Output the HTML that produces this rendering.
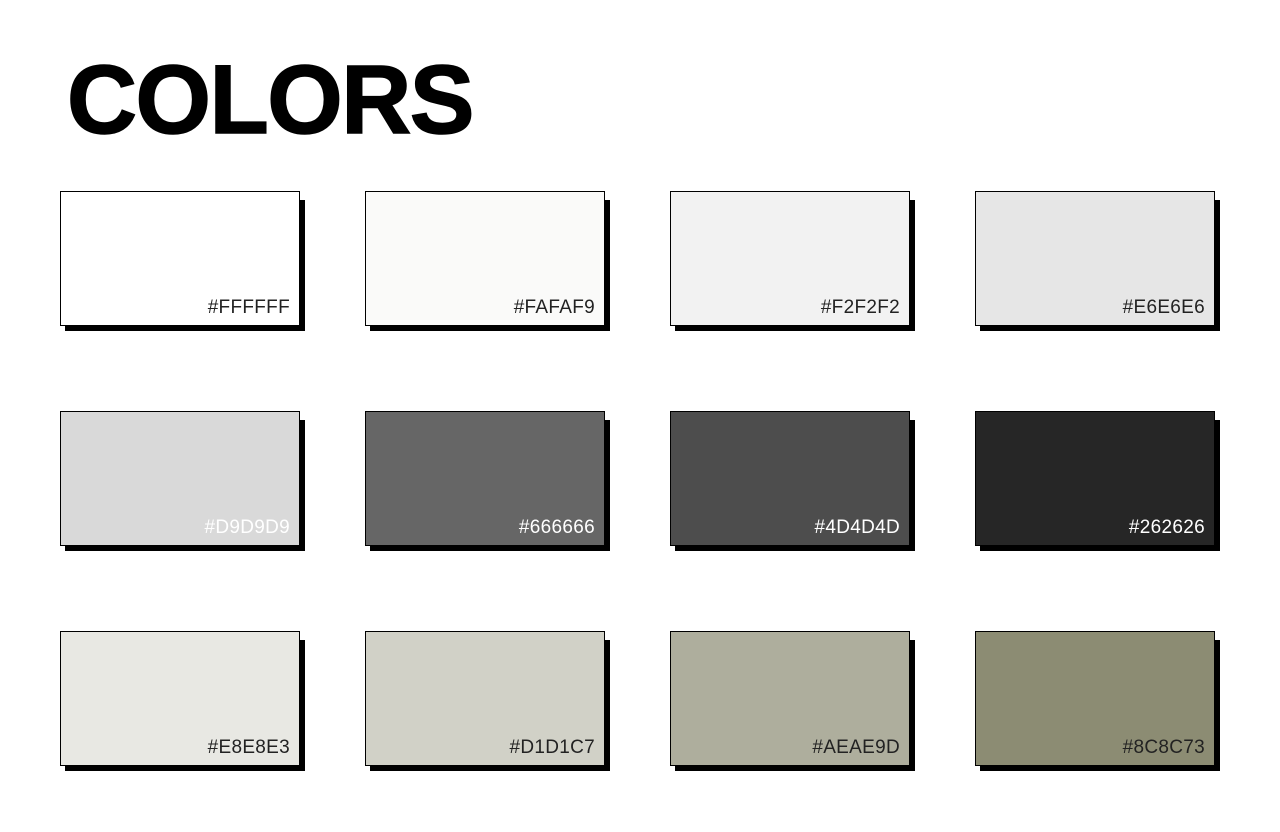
<!DOCTYPE html>
<html><head><meta charset="utf-8"><style>
html,body{margin:0;padding:0;background:#fff;width:1280px;height:832px;overflow:hidden}
h1{position:absolute;left:67px;top:40px;margin:0;font-family:"Liberation Sans",sans-serif;font-weight:900;font-size:97px;letter-spacing:-1.5px;line-height:120px;color:#000;-webkit-text-stroke:1.5px #000}
.s{position:absolute;width:240px;height:131px;background:#000}
.c{position:absolute;width:238px;height:133px;border:1px solid #000}
.c span{position:absolute;right:9px;bottom:6px;font-family:"Liberation Sans",sans-serif;font-size:19px;color:#222;letter-spacing:0.3px}
.w span{color:#fff}
</style></head><body>
<h1>COLORS</h1>
<div class="s" style="left:65px;top:200px"></div><div class="s" style="left:370px;top:200px"></div><div class="s" style="left:675px;top:200px"></div><div class="s" style="left:980px;top:200px"></div>
<div class="s" style="left:65px;top:420px"></div><div class="s" style="left:370px;top:420px"></div><div class="s" style="left:675px;top:420px"></div><div class="s" style="left:980px;top:420px"></div>
<div class="s" style="left:65px;top:640px"></div><div class="s" style="left:370px;top:640px"></div><div class="s" style="left:675px;top:640px"></div><div class="s" style="left:980px;top:640px"></div>
<div class="c" style="left:60px;top:191px;background:#FFFFFF"><span>#FFFFFF</span></div>
<div class="c" style="left:365px;top:191px;background:#FAFAF9"><span>#FAFAF9</span></div>
<div class="c" style="left:670px;top:191px;background:#F2F2F2"><span>#F2F2F2</span></div>
<div class="c" style="left:975px;top:191px;background:#E6E6E6"><span>#E6E6E6</span></div>
<div class="c w" style="left:60px;top:411px;background:#D9D9D9"><span>#D9D9D9</span></div>
<div class="c w" style="left:365px;top:411px;background:#666666"><span>#666666</span></div>
<div class="c w" style="left:670px;top:411px;background:#4D4D4D"><span>#4D4D4D</span></div>
<div class="c w" style="left:975px;top:411px;background:#262626"><span>#262626</span></div>
<div class="c" style="left:60px;top:631px;background:#E8E8E3"><span>#E8E8E3</span></div>
<div class="c" style="left:365px;top:631px;background:#D1D1C7"><span>#D1D1C7</span></div>
<div class="c" style="left:670px;top:631px;background:#AEAE9D"><span>#AEAE9D</span></div>
<div class="c" style="left:975px;top:631px;background:#8C8C73"><span>#8C8C73</span></div>
</body></html>
